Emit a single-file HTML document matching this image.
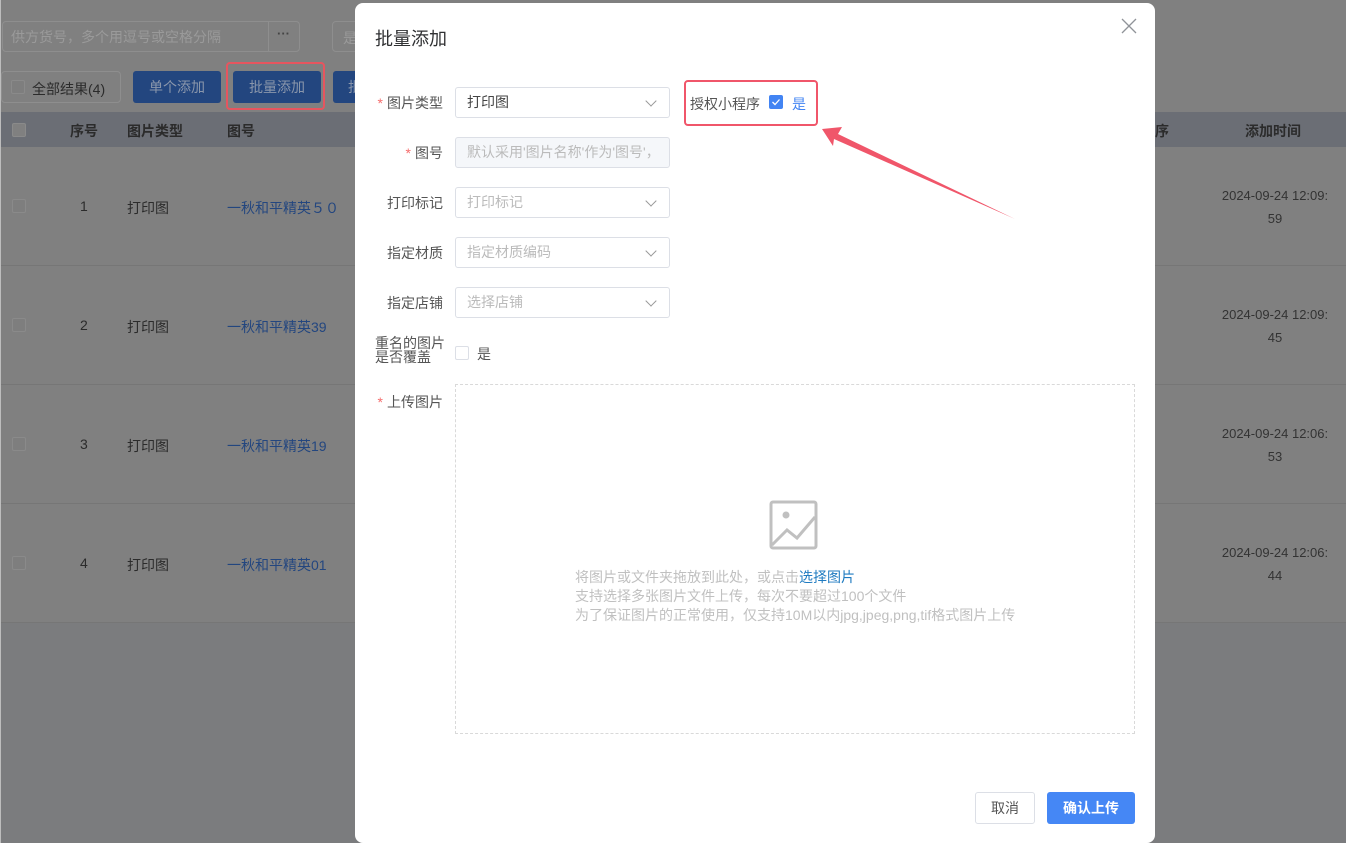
<!DOCTYPE html>
<html><head><meta charset="utf-8"><style>
*{box-sizing:border-box;margin:0;padding:0}
html,body{width:1346px;height:843px;overflow:hidden}
body{background:#7b7c7e;font-family:"Liberation Sans","Noto Sans CJK SC",sans-serif;font-size:14px;position:relative}
.a{position:absolute}
.bg{left:1px;top:0;width:1345px;height:622px;background:#808080}
.hd{left:1px;top:112px;width:1345px;height:35px;background:#6b6e75}
.sep{left:1px;width:1345px;height:1px;background:#767676}
.t{color:#2b2b2b;font-size:14px}
.lnk{color:#23467f;font-size:14px}
.cb{width:14px;height:14px;border:1px solid #8a8a8a;background:#7e7e7e;border-radius:2px}
.btn{background:#23467f;color:#8a96ab;font-size:14px;text-align:center;line-height:32px;border-radius:3px;height:32px}
.m{left:355px;top:3px;width:800px;height:840px;background:#fff;border-radius:8px}
.lab{font-size:14px;color:#555;text-align:right;width:70px}
.star{color:#f56c6c;margin-right:4px}
.inp{border:1px solid #dcdfe6;border-radius:3px;height:31px;width:215px;padding-left:11px;line-height:29px;font-size:14px;color:#bbb}
.ch{position:absolute;right:14px;top:9px;width:8px;height:8px;border-right:1px solid #999;border-bottom:1px solid #999;transform:rotate(45deg)}
</style></head><body>
<div class="a bg"></div>
<div class="a" style="left:0;top:0;width:1px;height:843px;background:#bdbdbd"></div>
<div class="a" style="left:2px;top:21px;width:298px;height:31px;border:1px solid #8e8e8e;border-radius:4px"></div>
<div class="a" style="left:268px;top:21px;width:1px;height:31px;background:#8e8e8e"></div>
<div class="a" style="left:11px;top:27px;color:#9a9a9a;font-size:14px">供方货号，多个用逗号或空格分隔</div>
<div class="a" style="left:277px;top:26px;color:#444;font-size:13px;font-weight:bold">···</div>
<div class="a" style="left:332px;top:21px;width:30px;height:31px;border:1px solid #8e8e8e;border-radius:4px;color:#9a9a9a;padding:6px 10px">是</div>
<div class="a" style="left:1px;top:71px;width:120px;height:32px;border:1px solid #8e8e8e;border-radius:4px"></div>
<div class="a cb" style="left:11px;top:80px"></div>
<div class="a t" style="left:32px;top:79px">全部结果(4)</div>
<div class="a btn" style="left:133px;top:71px;width:88px">单个添加</div>
<div class="a" style="left:226px;top:62px;width:99px;height:48px;border:2px solid #e6555f;border-radius:4px"></div>
<div class="a btn" style="left:233px;top:71px;width:88px">批量添加</div>
<div class="a btn" style="left:333px;top:71px;width:30px;text-align:left;padding-left:15px">批</div>
<div class="a hd"></div>
<div class="a cb" style="left:12px;top:123px;background:#808080"></div>
<div class="a t" style="left:70px;top:121px;font-weight:bold">序号</div>
<div class="a t" style="left:127px;top:121px;font-weight:bold">图片类型</div>
<div class="a t" style="left:227px;top:121px;font-weight:bold">图号</div>
<div class="a t" style="left:1155px;top:121px;font-weight:bold">序</div>
<div class="a t" style="left:1245px;top:121px;font-weight:bold">添加时间</div>
<div class="a sep" style="top:265px"></div><div class="a sep" style="top:384px"></div><div class="a sep" style="top:503px"></div><div class="a sep" style="top:622px"></div>
<div class="a cb" style="left:12px;top:199px"></div><div class="a t" style="left:80px;top:198px">1</div><div class="a t" style="left:127px;top:198px">打印图</div><div class="a lnk" style="left:227px;top:198px">一秋和平精英５０</div>
<div class="a cb" style="left:12px;top:318px"></div><div class="a t" style="left:80px;top:317px">2</div><div class="a t" style="left:127px;top:317px">打印图</div><div class="a lnk" style="left:227px;top:317px">一秋和平精英39</div>
<div class="a cb" style="left:12px;top:437px"></div><div class="a t" style="left:80px;top:436px">3</div><div class="a t" style="left:127px;top:436px">打印图</div><div class="a lnk" style="left:227px;top:436px">一秋和平精英19</div>
<div class="a cb" style="left:12px;top:556px"></div><div class="a t" style="left:80px;top:555px">4</div><div class="a t" style="left:127px;top:555px">打印图</div><div class="a lnk" style="left:227px;top:555px">一秋和平精英01</div>
<div class="a" style="left:1212px;top:184px;width:126px;text-align:center;color:#333;font-size:13px;line-height:23px">2024-09-24 12:09:<br>59</div>
<div class="a" style="left:1212px;top:303px;width:126px;text-align:center;color:#333;font-size:13px;line-height:23px">2024-09-24 12:09:<br>45</div>
<div class="a" style="left:1212px;top:422px;width:126px;text-align:center;color:#333;font-size:13px;line-height:23px">2024-09-24 12:06:<br>53</div>
<div class="a" style="left:1212px;top:541px;width:126px;text-align:center;color:#333;font-size:13px;line-height:23px">2024-09-24 12:06:<br>44</div>

<div class="a m">
<div class="a" style="left:20px;top:22px;font-size:18px;color:#303133">批量添加</div>
<svg class="a" style="left:766px;top:15px" width="16" height="16"><path d="M1 1L15 15M15 1L1 15" stroke="#909399" stroke-width="1.3"/></svg>
<div class="a lab" style="left:18px;top:90px"><span class="star">*</span>图片类型</div>
<div class="a inp" style="left:100px;top:84px;color:#444">打印图<span class="ch"></span></div>
<div class="a lab" style="left:18px;top:140px"><span class="star">*</span>图号</div>
<div class="a inp" style="left:100px;top:134px;background:#f5f7fa;color:#bbb;white-space:nowrap;overflow:hidden">默认采用'图片名称'作为'图号'，</div>
<div class="a lab" style="left:18px;top:190px">打印标记</div>
<div class="a inp" style="left:100px;top:184px">打印标记<span class="ch"></span></div>
<div class="a lab" style="left:18px;top:240px">指定材质</div>
<div class="a inp" style="left:100px;top:234px">指定材质编码<span class="ch"></span></div>
<div class="a lab" style="left:18px;top:290px">指定店铺</div>
<div class="a inp" style="left:100px;top:284px">选择店铺<span class="ch"></span></div>
<div class="a" style="left:20px;top:333px;font-size:14px;color:#555;line-height:14px">重名的图片<br>是否覆盖</div>
<div class="a" style="left:100px;top:343px;width:14px;height:14px;border:1px solid #dcdfe6;border-radius:2px"></div>
<div class="a" style="left:122px;top:341px;color:#555">是</div>
<div class="a lab" style="left:18px;top:389px"><span class="star">*</span>上传图片</div>
<div class="a" style="left:100px;top:381px;width:680px;height:350px;border:1px dashed #d9d9d9"></div>
<div class="a" style="left:329px;top:77px;width:134px;height:46px;border:2px solid #f0566a;border-radius:4px"></div>
<div class="a" style="left:335px;top:91px;color:#555">授权小程序</div>
<div class="a" style="left:414px;top:92px;width:14px;height:14px;background:#4284f3;border-radius:2px"></div>
<svg class="a" style="left:414px;top:92px" width="14" height="14"><path d="M3.5 7L6 9.5L10.5 4.5" stroke="#fff" stroke-width="1.3" fill="none"/></svg>
<div class="a" style="left:437px;top:91px;color:#4284f3">是</div>
<svg class="a" style="left:414px;top:497px" width="52" height="52"><rect x="2" y="2" width="45" height="46" rx="2" fill="none" stroke="#c0c0c0" stroke-width="3"/><circle cx="17" cy="15" r="3.5" fill="#c0c0c0"/><path d="M3 45L18 30L28 38L46 17" fill="none" stroke="#c0c0c0" stroke-width="3"/></svg>
<div class="a" style="left:220px;top:565px;color:#c0c0c0;font-size:14px;line-height:19px;white-space:nowrap">将图片或文件夹拖放到此处，或点击<span style="color:#1f7bc1">选择图片</span><br>支持选择多张图片文件上传，每次不要超过100个文件<br>为了保证图片的正常使用，仅支持10M以内jpg,jpeg,png,tif格式图片上传</div>
<div class="a" style="left:620px;top:789px;width:60px;height:32px;border:1px solid #dcdfe6;border-radius:3px;text-align:center;line-height:30px;color:#555">取消</div>
<div class="a" style="left:692px;top:789px;width:88px;height:32px;background:#4587f5;border-radius:3px;text-align:center;line-height:32px;color:#fff;font-weight:bold">确认上传</div>
</div>
<svg class="a" style="left:0;top:0" width="1346" height="843"><polygon points="822,129 842,127 838,134 1015,219 834,139 833,146" fill="#f0566a"/></svg>
</body></html>
